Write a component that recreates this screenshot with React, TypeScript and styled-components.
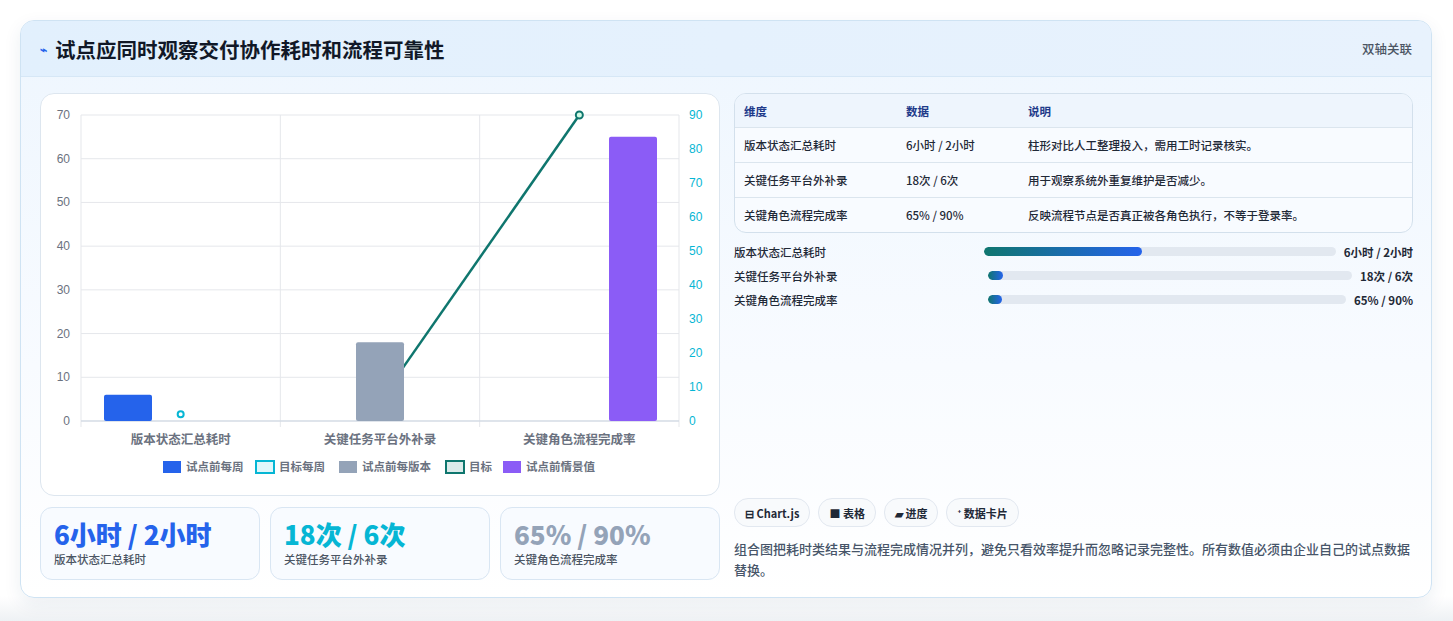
import React from "react";
import styled, { createGlobalStyle } from "styled-components";

const G = createGlobalStyle`
  body { margin:0; background:#fff; font-family: "Noto Sans CJK SC", "Noto Sans", sans-serif; }
`;
const Page = styled.div`padding:20px 21px 22px 20px; height:621px; box-sizing:border-box; background:linear-gradient(#fff 96%, #eef1f4);`;
const Card = styled.div`border:1px solid #cfe3f3; border-radius:14px; background:linear-gradient(180deg,#eef6fe 0%,#f8fbff 60%,#fff 100%); box-shadow:0 6px 18px rgba(30,60,100,.08); overflow:hidden;`;
const Header = styled.div`height:55px; display:flex; align-items:center; justify-content:space-between; padding:0 19px; background:linear-gradient(90deg,#e2f0fd,#e8f2fd); border-bottom:1px solid #d6e7f6;`;
const Title = styled.h1`margin:0; font-size:20.5px; font-weight:700; color:#111827; display:flex; align-items:center; gap:8px;`;
const Tag = styled.span`font-size:12.5px; color:#4b5563; font-weight:500;`;
const Body = styled.div`display:grid; grid-template-columns:680px 679px; gap:14px; padding:16px 19px 17px 19px;`;
const Col = styled.div`display:flex; flex-direction:column;`;
const ChartCard = styled.div`height:403px; border:1px solid #dde6ef; border-radius:14px; background:#fff; box-sizing:border-box;`;
const Stats = styled.div`display:grid; grid-template-columns:repeat(3,1fr); gap:10px; margin-top:11px;`;
const Stat = styled.div`height:73px; border:1px solid #d9e6f3; border-radius:12px; background:#f8fbff; padding:9px 13px; box-sizing:border-box;`;
const StatV = styled.div<{c:string}>`font-size:26px; font-weight:800; color:${p=>p.c}; line-height:34px; font-family:"Noto Sans CJK SC",sans-serif;`;
const StatL = styled.div`font-size:11.5px; color:#4b5563; font-weight:500;`;
const Table = styled.div`border:1px solid #d3e0ec; border-radius:12px; overflow:hidden; background:#f8fbff;`;
const Row = styled.div<{h?:boolean}>`display:grid; grid-template-columns:162px 122px 1fr; align-items:center; height:${p=>p.h?33:34}px; padding-left:9px; font-size:11.5px; color:${p=>p.h?"#1e3a8a":"#1f2937"}; font-weight:${p=>p.h?600:500}; background:${p=>p.h?"#eef5fd":"transparent"}; border-top:${p=>p.h?"none":"1px solid #dbe5ee"};`;
const Bars = styled.div`display:flex; flex-direction:column; gap:7px; margin-top:10px;`;
const BarRow = styled.div`display:grid; grid-template-columns:250px 1fr auto; align-items:center; font-size:11.5px; font-weight:500; color:#1f2937; height:17px;`;
const Track = styled.div<{ml:number}>`height:9px; border-radius:5px; background:#e2e8f0; margin-left:${p=>p.ml}px; margin-right:8px; overflow:hidden;`;
const Fill = styled.div`height:100%; border-radius:5px; background:linear-gradient(90deg,#0f766e,#2563eb);`;
const BarVal = styled.span`font-weight:700; font-size:11.5px;`;
const Chips = styled.div`display:flex; gap:8px; margin-top:auto;`;
const Chip = styled.span`height:27px; padding:0 10px; border:1px solid #e2e8f0; border-radius:14px; background:#f8fafc; display:inline-flex; align-items:center; font-size:11px; font-weight:600; color:#1f2937;`;
const Note = styled.p`margin:11px 0 0; font-size:13px; line-height:21px; color:#475569; font-weight:500;`;

const cats=["版本状态汇总耗时","关键任务平台外补录","关键角色流程完成率"];
function Chart(){
  const x0=40,x1=638,y0=21,yb=327;
  const yl=(v:number)=>yb-v/70*(yb-y0), yr=(v:number)=>yb-v/90*(yb-y0);
  const cw=(x1-x0)/3;
  return <svg width="680" height="400" style={{display:"block"}}>
    {[0,1,2,3,4,5,6,7].map(i=>{const y=yl(i*10);return <g key={i}>
      <line x1={x0} x2={x1} y1={y} y2={y} stroke="#e5e7eb"/>
      <text x={x0-11} y={y+4} fontSize="12" fill="#6b7280" textAnchor="end" fontFamily="Liberation Sans">{i*10}</text></g>})}
    {[0,10,20,30,40,50,60,70,80,90].map(v=><text key={v} x={x1+10} y={yr(v)+4} fontSize="12" fill="#06b6d4" fontFamily="Liberation Sans">{v}</text>)}
    {[0,1,2,3].map(i=><line key={i} x1={x0+i*cw} x2={x0+i*cw} y1={y0} y2={yb+6} stroke="#e5e7eb"/>)}
    <line x1={x0} x2={x1} y1={yb} y2={yb} stroke="#cbd5e1"/>
    <polyline points={`${x0+cw*1.5},${yr(6)} ${x0+cw*2.5},${yr(90)}`} fill="none" stroke="#0f766e" strokeWidth="2.5"/>
    <circle cx={x0+cw*2.5} cy={yr(90)} r="3.5" fill="#d1fae5" stroke="#0f766e" strokeWidth="2"/>
    <circle cx={x0+cw*0.5} cy={yr(2)} r="3" fill="#fff" stroke="#06b6d4" strokeWidth="2"/>
    <rect x={63} y={yl(6)} width={48} height={yb-yl(6)} fill="#2563eb" rx="2"/>
    <rect x={315} y={yl(18)} width={48} height={yb-yl(18)} fill="#94a3b8" rx="2"/>
    <rect x={568} y={yl(65)} width={48} height={yb-yl(65)} fill="#8b5cf6" rx="2"/>
    {cats.map((c,i)=><text key={c} x={x0+cw*(i+.5)} y={350} fontSize="12.5" fill="#6b7280" textAnchor="middle" fontWeight="600">{c}</text>)}
    <g fontSize="11.5" fill="#6b7280" fontWeight="600">
      <rect x={122} y={367} width={18} height={12} fill="#2563eb"/><text x={145} y={377}>试点前每周</text>
      <rect x={215} y={367} width={18} height={12} fill="#e0f7fb" stroke="#06b6d4" strokeWidth="2"/><text x={238} y={377}>目标每周</text>
      <rect x={298} y={367} width={18} height={12} fill="#94a3b8"/><text x={321} y={377}>试点前每版本</text>
      <rect x={405} y={367} width={18} height={12} fill="#dcebea" stroke="#0f766e" strokeWidth="2"/><text x={428} y={377}>目标</text>
      <rect x={462} y={367} width={18} height={12} fill="#8b5cf6"/><text x={485} y={377}>试点前情景值</text>
    </g>
  </svg>;
}

export default function App(){
  return <><G/><Page><Card>
    <Header><Title><span style={{fontSize:12,color:"#2563eb"}}>⌁</span>试点应同时观察交付协作耗时和流程可靠性</Title><Tag>双轴关联</Tag></Header>
    <Body>
      <Col>
        <ChartCard><Chart/></ChartCard>
        <Stats>
          <Stat><StatV c="#2563eb">6小时 / 2小时</StatV><StatL>版本状态汇总耗时</StatL></Stat>
          <Stat><StatV c="#06b6d4">18次 / 6次</StatV><StatL>关键任务平台外补录</StatL></Stat>
          <Stat><StatV c="#94a3b8">65% / 90%</StatV><StatL>关键角色流程完成率</StatL></Stat>
        </Stats>
      </Col>
      <Col>
        <Table>
          <Row h><span>维度</span><span>数据</span><span>说明</span></Row>
          <Row><span>版本状态汇总耗时</span><span>6小时 / 2小时</span><span>柱形对比人工整理投入，需用工时记录核实。</span></Row>
          <Row><span>关键任务平台外补录</span><span>18次 / 6次</span><span>用于观察系统外重复维护是否减少。</span></Row>
          <Row><span>关键角色流程完成率</span><span>65% / 90%</span><span>反映流程节点是否真正被各角色执行，不等于登录率。</span></Row>
        </Table>
        <Bars>
          <BarRow><span>版本状态汇总耗时</span><Track ml={0}><Fill style={{width:"45%"}}/></Track><BarVal>6小时 / 2小时</BarVal></BarRow>
          <BarRow><span>关键任务平台外补录</span><Track ml={4}><Fill style={{width:"4%"}}/></Track><BarVal>18次 / 6次</BarVal></BarRow>
          <BarRow><span>关键角色流程完成率</span><Track ml={4}><Fill style={{width:"4%"}}/></Track><BarVal>65% / 90%</BarVal></BarRow>
        </Bars>
        <Chips><Chip>⊟ Chart.js</Chip><Chip>■ 表格</Chip><Chip>▰ 进度</Chip><Chip>⁺ 数据卡片</Chip></Chips>
        <Note>组合图把耗时类结果与流程完成情况并列，避免只看效率提升而忽略记录完整性。所有数值必须由企业自己的试点数据替换。</Note>
      </Col>
    </Body>
  </Card></Page></>;
}
